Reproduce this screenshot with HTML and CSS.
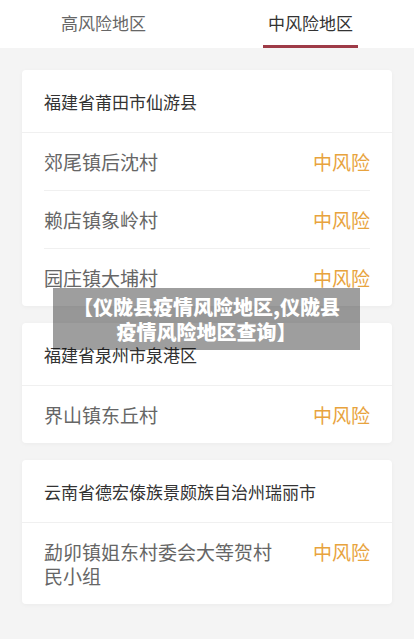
FILE: index.html
```html
<!DOCTYPE html>
<html lang="zh-CN">
<head>
    <meta charset="UTF-8">
    <meta name="viewport" content="width=device-width, initial-scale=1.0">
    <title>仪陇县疫情风险地区</title>
    <link rel="stylesheet" href="styles.css">
</head>
<body>
    <div class="tabs">
        <div class="tab">高风险地区</div>
        <div class="tab active">中风险地区</div>
    </div>

    <div class="list">
        <div class="card">
            <div class="card-head">福建省莆田市仙游县</div>
            <div class="row"><span class="name">郊尾镇后沈村</span><span class="level">中风险</span></div>
            <div class="row"><span class="name">赖店镇象岭村</span><span class="level">中风险</span></div>
            <div class="row"><span class="name">园庄镇大埔村</span><span class="level">中风险</span></div>
        </div>
        <div class="card">
            <div class="card-head">福建省泉州市泉港区</div>
            <div class="row"><span class="name">界山镇东丘村</span><span class="level">中风险</span></div>
        </div>
        <div class="card">
            <div class="card-head">云南省德宏傣族景颇族自治州瑞丽市</div>
            <div class="row"><span class="name">勐卯镇姐东村委会大等贺村民小组</span><span class="level">中风险</span></div>
        </div>
    </div>

    <div class="caption">【仪陇县疫情风险地区,仪陇县<br>疫情风险地区查询】</div>
</body>
</html>
```

FILE: styles.css
```css
* {
    box-sizing: border-box;
}
body {
    margin: 0;
    background: #f4f4f4;
    font-family: "Noto Sans CJK SC", "Noto Sans", sans-serif;
    position: relative;
    min-height: 639px;
}
.tabs {
    display: flex;
    height: 48px;
    background: #fff;
}
.tab {
    flex: 1;
    position: relative;
    text-align: center;
    font-size: 17px;
    line-height: 46px;
    color: #666;
}
.tab.active {
    color: #333;
}
/* red bar under the selected tab */
.tab.active::after {
    content: "";
    position: absolute;
    left: 56px;
    right: 56px;
    bottom: 0;
    height: 3px;
    background: #9e3b47;
}
.list {
    padding: 22px 22px 0;
    display: flex;
    flex-direction: column;
    gap: 17px;
}
.card {
    background: #fff;
    border-radius: 4px;
    box-shadow: 0 1px 4px rgba(0, 0, 0, 0.04);
}
.card-head {
    padding: 20px 22px 19px;
    font-size: 17px;
    line-height: 23px;
    color: #333;
    border-bottom: 1px solid #f0f0f0;
}
.row {
    display: flex;
    justify-content: space-between;
    gap: 30px;
    margin: 0 22px;
    padding: 17px 0 16px;
    font-size: 19px;
    line-height: 24px;
    border-bottom: 1px solid #f0f0f0;
}
.row:last-child {
    border-bottom: none;
}
.name {
    color: #666;
}
.level {
    color: #e8a33d;
    white-space: nowrap;
}
/* grey banner laid over the page */
.caption {
    position: absolute;
    left: 53px;
    top: 288px;
    width: 307px;
    height: 62px;
    padding-top: 6px;
    background: rgba(0, 0, 0, 0.38);
    color: #fff;
    font-size: 20px;
    font-weight: 900;
    line-height: 25px;
    text-align: center;
}
```
